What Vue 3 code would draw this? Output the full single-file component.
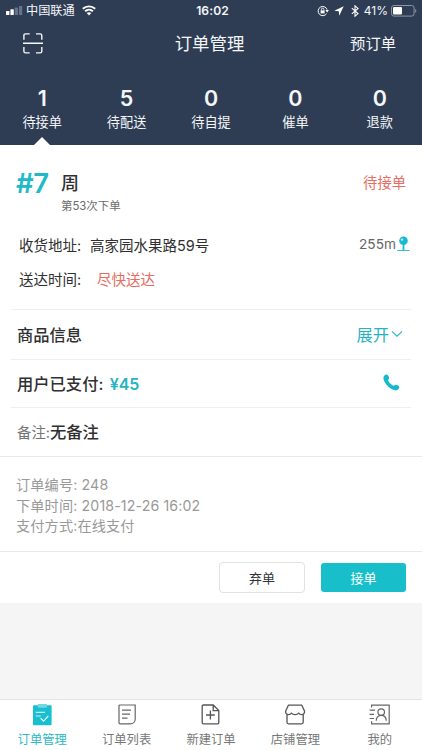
<script setup>
const stats = [
  { count: 1, label: '待接单', active: true },
  { count: 5, label: '待配送' },
  { count: 0, label: '待自提' },
  { count: 0, label: '催单' },
  { count: 0, label: '退款' },
]
const tabs = [
  { icon: 'manage', label: '订单管理', active: true },
  { icon: 'list', label: '订单列表' },
  { icon: 'new', label: '新建订单' },
  { icon: 'shop', label: '店铺管理' },
  { icon: 'me', label: '我的' },
]
</script>

<template>
  <div class="screen">
    <header class="header">
      <div class="status">
        <div class="status-side">
          <svg class="signal" width="17" height="9" viewBox="0 0 17 9">
            <rect x="0" y="5" width="3.4" height="4" rx=".6" fill="#fff" />
            <rect x="4.4" y="3.2" width="3.4" height="5.8" rx=".6" fill="#fff" />
            <rect x="8.8" y="1.6" width="3.2" height="7.4" rx=".6" fill="#66748a" />
            <rect x="13" y="0" width="3.2" height="9" rx=".6" fill="#66748a" />
          </svg>
          <span class="carrier">中国联通</span>
          <svg class="wifi" width="14" height="11" viewBox="0 0 14 11">
            <path d="M.8 3.8C4.3.5 9.7.5 13.2 3.8M3.1 6.3c2.2-2.1 5.6-2.1 7.8 0" fill="none" stroke="#fff" stroke-width="1.9" />
            <path d="M4.7 8.1c1.3-1.2 3.3-1.2 4.6 0L7 10.6z" fill="#fff" />
          </svg>
        </div>
        <span class="clock">16:02</span>
        <div class="status-side right">
          <svg class="lock" width="12" height="12" viewBox="0 0 12 12" fill="none" stroke="#fff">
            <path d="M9.6 8.6A4.6 4.6 0 1 1 10.1 4.6" />
            <path d="M8.3 5.1h3.6L10.2 7.4z" fill="#fff" stroke="none" />
            <rect x="3.6" y="5.4" width="4" height="3" fill="#fff" stroke="none" />
            <path d="M4.4 5.5V4.4a1.2 1.2 0 0 1 2.4 0v1.1" stroke-width=".9" />
          </svg>
          <svg class="locate" width="10" height="10" viewBox="0 0 10 10"><path d="M9.7.3.3 4.8l4.5.4.4 4.5z" fill="#fff" /></svg>
          <svg class="bluetooth" width="8" height="12" viewBox="0 0 8 12"><path d="M.8 3.2 7 8.6 4 11.2V.8l3 2.6L.8 8.8" fill="none" stroke="#fff" stroke-width="1.1" /></svg>
          <span class="percent">41%</span>
          <svg class="battery" width="26" height="12" viewBox="0 0 26 12">
            <rect x=".5" y=".5" width="22.6" height="10.6" rx="2.4" fill="none" stroke="#8b96a6" />
            <rect x="2" y="2" width="9" height="7.6" rx="1" fill="#fff" />
            <path d="M24.2 4v3.8c1.5-.5 1.5-3.3 0-3.8z" fill="#8b96a6" />
          </svg>
        </div>
      </div>
      <nav class="navbar">
        <svg class="scan" width="20" height="21" viewBox="0 0 20 21" fill="none" stroke="#f5f7fa" stroke-width="1.4">
          <path d="M.9 6.8V2.6Q.9.9 2.6.9h4.1M13 .9h4.1q1.7 0 1.7 1.7v4.2M.9 14v4.2q0 1.7 1.7 1.7h4.1M13 19.9h4.1q1.7 0 1.7-1.7V14M0 10.3h20" />
        </svg>
        <h1 class="title">订单管理</h1>
        <span class="preorder">预订单</span>
      </nav>
      <div class="stats">
        <div v-for="s in stats" :key="s.label" class="stat" :class="{ active: s.active }">
          <span class="count">{{ s.count }}</span>
          <span class="stat-label">{{ s.label }}</span>
        </div>
      </div>
    </header>

    <main class="card">
      <section class="customer">
        <div class="customer-head">
          <span class="seq">#7</span>
          <span class="name">周</span>
          <span class="state">待接单</span>
        </div>
        <div class="times">第53次下单</div>
        <div class="line address">
          <span class="key">收货地址:</span>
          <span>高家园水果路59号</span>
          <span class="distance">255m</span>
          <svg class="pin" width="13" height="16" viewBox="0 0 13 16">
            <path d="M6.5 8v6" stroke="#18b8d0" stroke-width="1.8" />
            <path d="M.4 14.5h12.2" stroke="#35bfd1" stroke-width="1" />
            <circle cx="6.5" cy="4.8" r="4.3" fill="#18b8d0" />
            <circle cx="5" cy="3.6" r="1.2" fill="#c7eff5" />
          </svg>
        </div>
        <div class="line arrival">
          <span class="key">送达时间:</span>
          <span class="soon">尽快送达</span>
        </div>
      </section>
      <section class="row goods">
        <span>商品信息</span>
        <span class="expand">展开
          <svg width="12" height="8" viewBox="0 0 12 8"><path d="M1 1.3 6 6.2 11 1.3" fill="none" stroke="#25b4bf" stroke-width="1.1" /></svg>
        </span>
      </section>
      <section class="row paid">
        <span>用户已支付: <b class="price">¥45</b></span>
        <svg class="phone" width="17" height="17" viewBox="0 0 17 17">
          <path d="M1.2 1.8C2.3.5 4.1.2 4.9 1.2c.8 1 1.4 2.2 1.2 3.2C5.9 5.3 5 5.6 5.1 6.3c.3 1.8 3.8 5.1 5.5 5.4.8.1 1-.8 2-.9 1.1-.1 2.7.7 3.5 1.6.8 1-.3 2.5-1.5 3.3-1.5 1-3.8.8-6-.6C4.8 12.7 2 9.4.9 6.4.3 4.6.2 3 1.2 1.8z" fill="#18b8cc" />
        </svg>
      </section>
      <section class="row remark">
        <span class="remark-key">备注:</span><span>无备注</span>
      </section>
      <section class="meta">
        <div>订单编号: 248</div>
        <div>下单时间: 2018-12-26 16:02</div>
        <div>支付方式:在线支付</div>
      </section>
      <section class="actions">
        <button class="btn">弃单</button>
        <button class="btn primary">接单</button>
      </section>
    </main>

    <nav class="tabbar">
      <div v-for="t in tabs" :key="t.icon" class="tab" :class="{ active: t.active }">
        <svg v-if="t.icon === 'manage'" width="22" height="22" viewBox="0 0 22 22" fill="none">
          <rect x="2" y="1.3" width="18.6" height="20" rx="1" fill="#18bfd0" />
          <path d="M6.800 0H16v2.800q0 1-1 1H7.800q-1 0-1-1z" fill="#73d7e1" />
          <path d="M4.800 8.300h9.300M4.800 12h5" stroke="#c9f2f5" stroke-width="1.2" />
          <path d="m9.600 14.200 3.100 2.900 4.600-5.200" stroke="#e0fafb" stroke-width="1.3" />
        </svg>
        <svg v-else-if="t.icon === 'list'" width="22" height="22" viewBox="0 0 22 22" fill="none" stroke="#666" stroke-width="1.2">
          <path d="M4 1h15.200v14.200c0 2.700-2.300 4.600-5 4.600H4q-1 0-1-1V2q0-1 1-1zM6 6.200h9M6 10.200h8M6 14.200h5.500" />
        </svg>
        <svg v-else-if="t.icon === 'new'" width="22" height="22" viewBox="0 0 22 22" fill="none" stroke="#555" stroke-width="1.3">
          <path d="M13.2 1H3.4Q2.200 1 2.200 2.200v16.400q0 1.200 1.200 1.200h14.200q1.200 0 1.200-1.200V6.600zM13.200 1v5.600h5.600M6 11h8.800M10.400 6.600v8.800" />
        </svg>
        <svg v-else-if="t.icon === 'shop'" width="22" height="22" viewBox="0 0 22 22" fill="none" stroke="#555" stroke-width="1.3">
          <path d="M4.400 1.200h13.400l2.700 5.900c.3 2-.9 3.500-2.600 3.500-1.500 0-2.600-.6-3.200-1.500-.7.900-2 1.500-3.600 1.500s-2.900-.6-3.600-1.500c-.6.900-1.700 1.500-3.200 1.500-1.700 0-2.900-1.500-2.600-3.500zM3 10.300v8q0 1.500 1.500 1.500h13.200q1.500 0 1.500-1.500v-8" stroke-linejoin="round" />
        </svg>
        <svg v-else width="22" height="22" viewBox="0 0 22 22" fill="none" stroke="#666" stroke-width="1.2">
          <path d="M2.600 3.600V1.100h17.600v18.700H2.600v-2.500M.6 6.100H6M.6 10.300H5M.6 14.500H5" />
          <circle cx="12.200" cy="8.100" r="3.300" />
          <path d="M7.200 16.700c0-3 1.900-5.300 5-5.300s5 2.300 5 5.300" />
        </svg>
        <span class="tab-label">{{ t.label }}</span>
      </div>
    </nav>
  </div>
</template>

<style>
body {
  margin: 0;
  overflow: hidden;
}
</style>

<style scoped>
.screen {
  width: 422px;
  height: 750px;
  display: flex;
  flex-direction: column;
  background: #f5f5f5;
  color: #303030;
  font-family: Inter, "Noto Sans CJK SC", sans-serif;
}
svg {
  display: block;
  flex: none;
}
.header {
  height: 145px;
  flex: none;
  background: #2e3d54;
  color: #f4f6f8;
}
.status {
  height: 21px;
  display: grid;
  grid-template-columns: 1fr auto 1fr;
  align-items: center;
  padding: 0 6px;
  box-sizing: border-box;
  line-height: 20px;
}
.status-side {
  display: flex;
  align-items: center;
}
.status-side.right {
  justify-content: flex-end;
}
.carrier {
  margin: 0 7px 0 3px;
  padding-top: 1px;
  font-size: 12.2px;
}
.clock {
  padding-left: 3px;
  font-size: 12.1px;
  font-weight: 600;
  letter-spacing: .1px;
}
.lock {
  margin-right: -1px;
}
.locate {
  margin: 0 7px 0 6px;
}
.percent {
  margin: 0 3px 0 5px;
  font-size: 12px;
}
.battery {
  margin-right: -1px;
}
.navbar {
  height: 44px;
  display: grid;
  grid-template-columns: 1fr auto 1fr;
  align-items: center;
  padding: 0 26px 0 23px;
}
.title {
  margin: 0;
  padding-top: 2px;
  font-size: 17.4px;
  line-height: 26px;
  font-weight: 400;
}
.preorder {
  justify-self: end;
  padding-top: 1px;
  font-size: 15.3px;
  line-height: 24px;
}
.stats {
  height: 80px;
  display: grid;
  grid-template-columns: repeat(5, 1fr);
}
.stat {
  display: flex;
  flex-direction: column;
  align-items: center;
  padding-top: 20px;
}
.count {
  font-size: 21.5px;
  font-weight: 600;
  line-height: 26px;
}
.stat-label {
  padding-top: 1px;
  font-size: 13.2px;
  line-height: 20px;
}
.stat.active::after {
  content: "";
  margin-top: auto;
  border: 8px solid transparent;
  border-top: 0;
  border-bottom-color: #fff;
}
.card {
  height: 458px;
  flex: none;
  background: #fff;
}
.customer {
  height: 164px;
  padding: 23px 16px 0;
  box-sizing: border-box;
}
.customer-head {
  display: flex;
  align-items: center;
  height: 30px;
}
.seq {
  width: 45px;
  color: #20b9c6;
  font-size: 27.5px;
  font-weight: 600;
  letter-spacing: -.5px;
}
.name {
  padding-bottom: 3px;
  font-size: 18px;
  font-weight: 500;
}
.state {
  margin-left: auto;
  padding-bottom: 3px;
  color: #e66d62;
  font-size: 14.3px;
}
.times {
  padding-left: 45px;
  color: #6b6b6b;
  font-size: 11.4px;
  line-height: 16px;
}
.line {
  display: flex;
  align-items: center;
  height: 34px;
  font-size: 14.5px;
  padding-left: 3px;
}
.address {
  margin-top: 13px;
  margin-right: -4px;
}
.key {
  width: 71px;
}
.distance {
  margin-left: auto;
  margin-right: 1px;
  color: #666;
  font-size: 13.7px;
}
.soon {
  margin-left: 7px;
  color: #e66d62;
}
.row {
  display: flex;
  align-items: center;
  justify-content: space-between;
  box-sizing: border-box;
  margin: 0 11px;
  padding: 0 6px 2px;
  border-top: 1px solid #eee;
  font-size: 16.3px;
  font-weight: 500;
}
.goods {
  height: 50px;
}
.expand {
  display: flex;
  align-items: center;
  gap: 2px;
  margin-right: 2px;
  color: #25b4bf;
  font-weight: 400;
}
.paid {
  height: 48px;
}
.price {
  margin-left: 2px;
  color: #25b4bf;
  font-size: 16px;
  font-weight: 600;
}
.phone {
  margin-right: 5px;
}
.remark {
  height: 49px;
  justify-content: flex-start;
}
.remark-key {
  color: #757575;
  font-size: 14.4px;
  font-weight: 400;
}
.meta {
  height: 95px;
  box-sizing: border-box;
  padding: 18px 16px 0;
  border-top: 1px solid #e8e8e8;
  color: #999;
  font-size: 14.2px;
  letter-spacing: .12px;
  line-height: 20.5px;
}
.actions {
  display: flex;
  justify-content: flex-end;
  align-items: center;
  gap: 16px;
  height: 52px;
  box-sizing: border-box;
  padding-right: 16px;
  border-top: 1px solid #e8e8e8;
}
.btn {
  width: 86px;
  height: 31px;
  padding: 0 0 1px;
  border: 1px solid #e2e2e2;
  border-radius: 4px;
  background: #fff;
  color: #333;
  font: inherit;
  font-size: 13px;
}
.btn.primary {
  width: 85px;
  height: 29px;
  border: 0;
  border-radius: 3px;
  background: #18bfcb;
  color: #fff;
}
.tabbar {
  display: grid;
  grid-template-columns: repeat(5, 1fr);
  height: 51px;
  box-sizing: border-box;
  margin-top: auto;
  border-top: 1px solid #e3e3e3;
  background: #fff;
}
.tab {
  display: flex;
  flex-direction: column;
  align-items: center;
  padding-top: 4px;
  color: #777;
}
.tab-label {
  margin-top: 5px;
  font-size: 12.3px;
  line-height: 18px;
}
.tab.active {
  color: #2bb9c4;
}
</style>
